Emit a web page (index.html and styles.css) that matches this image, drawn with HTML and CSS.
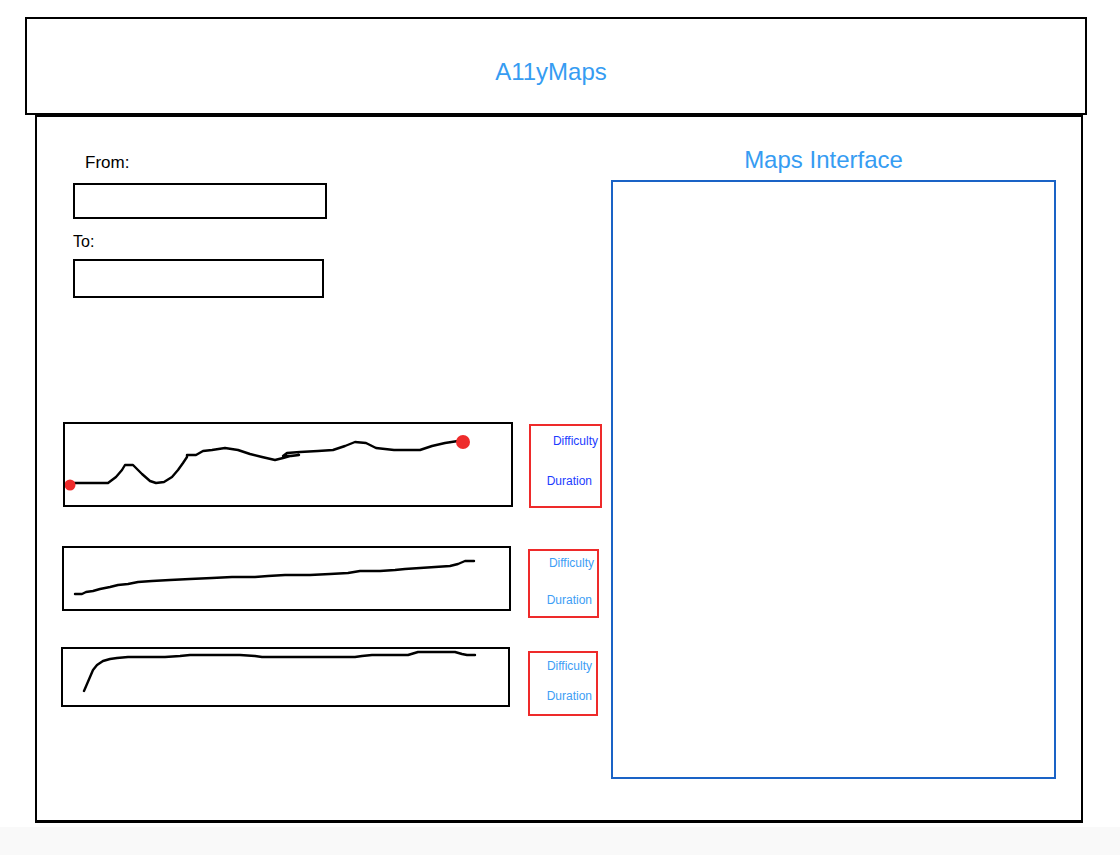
FILE: index.html
```html
<!DOCTYPE html>
<html lang="en">
<head>
<meta charset="utf-8">
<title>A11yMaps</title>
<link rel="stylesheet" href="styles.css">
</head>
<body>
<div class="page">
  <header class="site-header">
    <h1 class="brand">A11yMaps</h1>
  </header>
  <main class="main">
    <section class="left">
      <label class="lbl lbl-from" for="from">From:</label>
      <input class="field field-from" id="from" type="text">
      <label class="lbl lbl-to" for="to">To:</label>
      <input class="field field-to" id="to" type="text">

      <div class="route-row row1">
        <div class="route route1">
          <svg class="route-svg" viewBox="65 424 446 81" preserveAspectRatio="none">
            <polyline class="path" points="72,483 80,483 108,483 116,477 122,470 125,465 133,465 142,474 150,481 156,483 164,482 172,477 178,470 183,463 187,457 187,455 196,455 203,451 212,450 225,448 238,450 250,454 262,457 275,460 283,458 290,456 299,455 291,456 283,456 287,453 300,452 318,451 333,450 345,446 355,442 366,443 376,448 394,450 410,450 420,450 432,446 445,443 458,441"/>
            <circle class="dot" cx="70" cy="485" r="5.5"/>
            <circle class="dot" cx="463" cy="442" r="7"/>
          </svg>
        </div>
        <div class="info info1">
          <span class="dif">Difficulty</span>
          <span class="dur">Duration</span>
        </div>
      </div>

      <div class="route-row row2">
        <div class="route route2">
          <svg class="route-svg" viewBox="64 548 445 61" preserveAspectRatio="none">
            <polyline class="path" points="75,594 82,594 86,592 93,591 100,589 110,587 118,585 128,584 138,582 152,581 170,580 190,579 212,578 232,577 255,577 268,576 285,575 310,575 330,574 348,573 360,571 380,571 395,570 405,569 420,568 435,567 450,566 458,564 465,561 474,561"/>
          </svg>
        </div>
        <div class="info info2">
          <span class="dif">Difficulty</span>
          <span class="dur">Duration</span>
        </div>
      </div>

      <div class="route-row row3">
        <div class="route route3">
          <svg class="route-svg" viewBox="63 649 445 56" preserveAspectRatio="none">
            <polyline class="path" points="84,691 87,684 90,677 93,670 97,665 103,661 110,659 117,658 128,657 150,657 165,657 180,656 190,655 210,655 240,655 255,656 262,657 300,657 330,657 355,657 362,656 372,655 395,655 408,655 418,652 440,652 455,652 462,654 467,655 475,655"/>
          </svg>
        </div>
        <div class="info info3">
          <span class="dif">Difficulty</span>
          <span class="dur">Duration</span>
        </div>
      </div>
    </section>

    <section class="right">
      <h2 class="map-title">Maps Interface</h2>
      <div class="map-box"></div>
    </section>
  </main>
</div>
</body>
</html>
```

FILE: styles.css
```css
* { box-sizing: border-box; }

html {
  background: #f9f9f9;
}

body {
  margin: 0;
  font-family: "Liberation Sans", Arial, Helvetica, sans-serif;
  color: #000;
}

.page {
  background: #fff;
  height: 827px;
  padding-top: 17px;
  overflow: hidden;
}

.site-header {
  margin-left: 25px;
  width: 1062px;
  height: 98px;
  border: 2px solid #000;
  padding-top: 12px;
  display: flex;
  align-items: center;
  justify-content: center;
}

.brand {
  margin: 0 10px 0 0;
  font-weight: normal;
  font-size: 24px;
  line-height: 28px;
  color: #369cf2;
}

.main {
  margin-left: 35px;
  width: 1048px;
  height: 708px;
  border: 2px solid #000;
  border-bottom-width: 3px;
  display: flex;
}

.left {
  width: 574px;
  display: flex;
  flex-direction: column;
  align-items: flex-start;
}

.lbl {
  display: block;
  line-height: 18px;
}

.lbl-from {
  margin: 37px 0 0 48px;
  font-size: 17px;
}

.field {
  display: block;
  border: 2px solid #000;
  border-radius: 0;
  background: #fff;
  padding: 0;
  margin: 0;
  font: inherit;
}

.field-from {
  margin: 11px 0 0 36px;
  width: 254px;
  height: 36px;
}

.lbl-to {
  margin: 14px 0 0 36px;
  font-size: 16px;
}

.field-to {
  margin: 8px 0 0 36px;
  width: 251px;
  height: 39px;
}

.route-row {
  display: flex;
  align-items: flex-start;
}

.row1 { margin-top: 124px; }
.row2 { margin-top: 38px; }
.row3 { margin-top: 29px; }

.route {
  border: 2px solid #000;
}

.route1 { margin-left: 26px; width: 450px; height: 85px; }
.route2 { margin-left: 25px; width: 449px; height: 65px; }
.route3 { margin-left: 24px; width: 449px; height: 60px; }

.route-svg {
  display: block;
  width: 100%;
  height: 100%;
}

.path {
  fill: none;
  stroke: #000;
  stroke-width: 2.4;
  stroke-linejoin: round;
  stroke-linecap: round;
}

.dot {
  fill: #ee2b2b;
}

.info {
  border: 2px solid #ee2a2a;
  display: flex;
  flex-direction: column;
  align-items: flex-end;
  font-size: 12px;
  line-height: 14px;
  color: #3d9ef5;
}

.info span { display: block; }

.info1 {
  margin: 2px 0 0 16px;
  width: 73px;
  height: 84px;
  padding-top: 8px;
  color: #1c3cff;
}
.info1 .dif { padding-right: 2px; }
.info1 .dur { margin-top: 26px; padding-right: 8px; }

.info2 {
  margin: 3px 0 0 17px;
  width: 71px;
  height: 69px;
  padding-top: 5px;
}
.info2 .dif { padding-right: 3px; }
.info2 .dur { margin-top: 23px; padding-right: 5px; }

.info3 {
  margin: 4px 0 0 18px;
  width: 70px;
  height: 65px;
  padding-top: 6px;
}
.info3 .dif { padding-right: 4px; }
.info3 .dur { margin-top: 16px; padding-right: 4px; }

.right {
  width: 445px;
  display: flex;
  flex-direction: column;
}

.map-title {
  margin: 29px 20px 0 0;
  text-align: center;
  font-weight: normal;
  font-size: 24px;
  line-height: 28px;
  color: #369cf2;
}

.map-box {
  margin-top: 6px;
  width: 445px;
  height: 599px;
  border: 2px solid #1a63c6;
}
```
